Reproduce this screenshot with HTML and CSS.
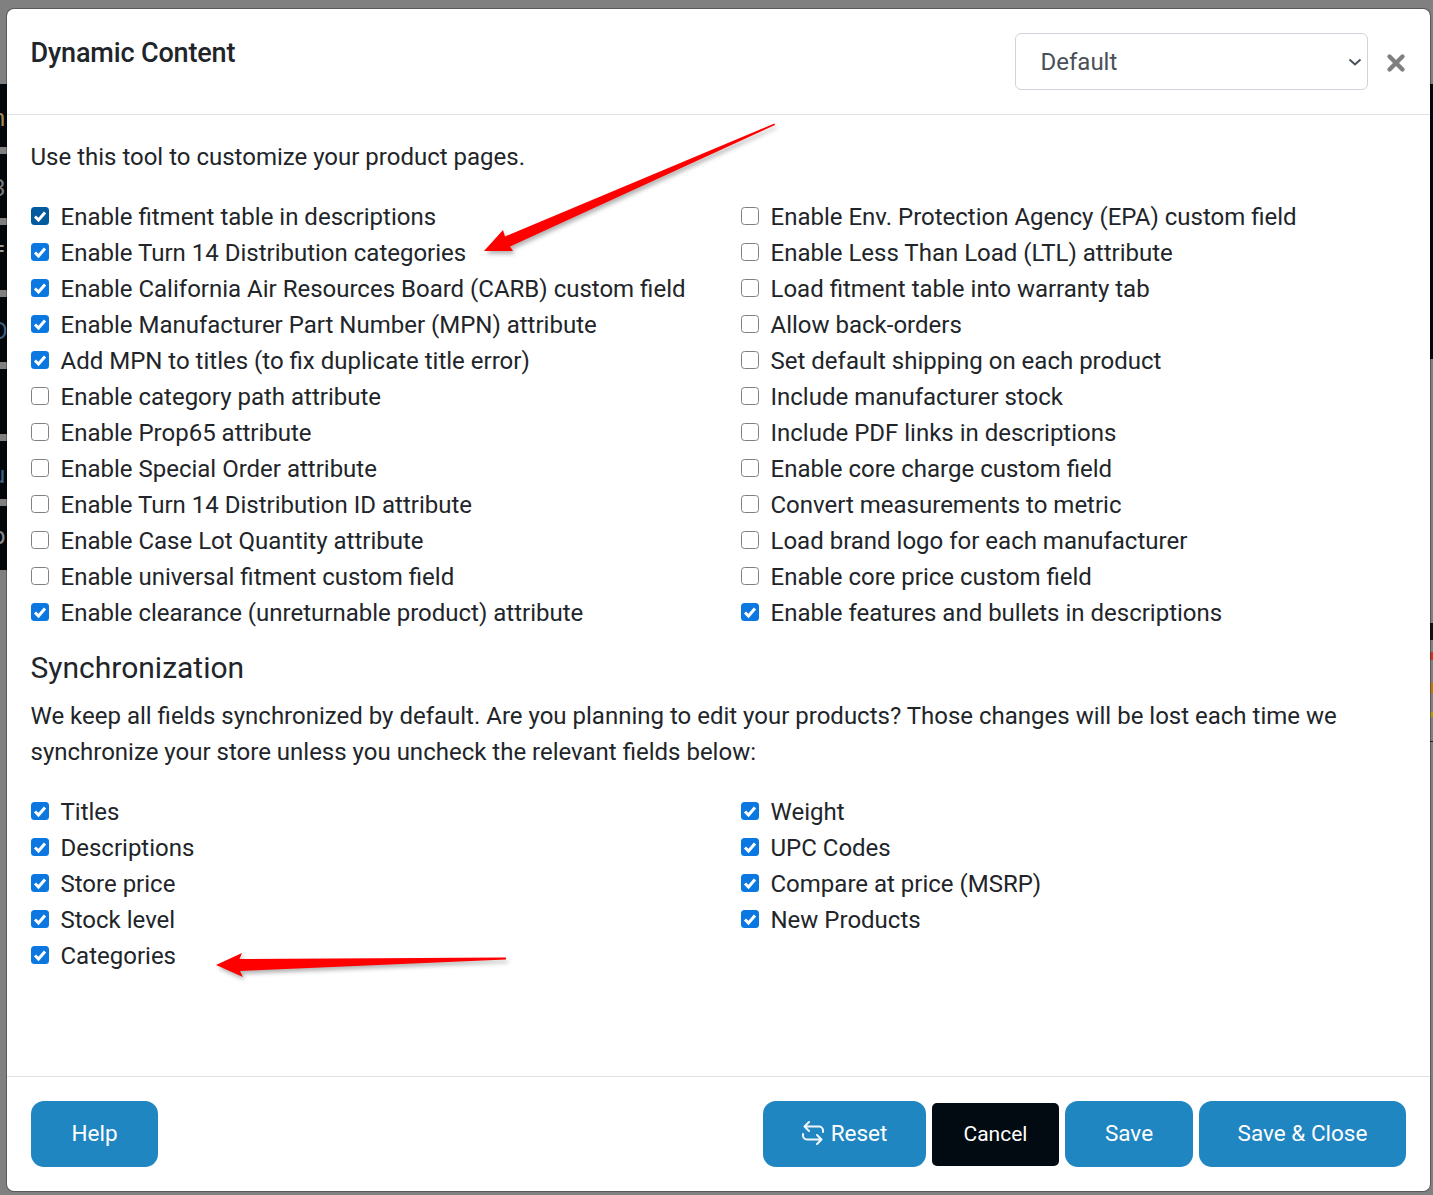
FILE: index.html
```html
<!DOCTYPE html>
<html lang="en">
<head>
<meta charset="utf-8">
<title>Dynamic Content</title>
<link rel="stylesheet" href="styles.css">
</head>
<body>
<div class="backdrop-left">
  <div class="strip s1"><span>n</span></div>
  <div class="strip s2"><span>3</span></div>
  <div class="strip s3"><span>=</span></div>
  <div class="strip s4"><span>D</span></div>
  <div class="strip s5"><span>t</span></div>
  <div class="strip s6"><span>u</span></div>
  <div class="strip s7"><span>p</span></div>
</div>
<div class="backdrop-right"></div>
<div class="mark m1"></div>
<div class="mark m2"></div>
<div class="mark m3"></div>
<div class="mark m4"></div>
<div class="mark m5"></div>
<main class="modal">
  <header class="modal-header">
    <h1 class="title">Dynamic Content</h1>
    <select class="preset"><option>Default</option></select>
    <button class="close" aria-label="Close">
      <svg width="20" height="20" viewBox="0 0 20 20"><path d="M3.500 3.500 L16.500 16.500 M16.500 3.500 L3.500 16.500" stroke="#808080" stroke-width="4.400" stroke-linecap="round"/></svg>
    </button>
  </header>
  <section class="modal-body">
    <p class="intro">Use this tool to customize your product pages.</p>
    <div class="options">
      <ul class="col">
        <li><label><input type="checkbox" class="focused" checked>Enable fitment table in descriptions</label></li>
        <li><label><input type="checkbox" checked>Enable Turn 14 Distribution categories</label></li>
        <li><label><input type="checkbox" checked>Enable California Air Resources Board (CARB) custom field</label></li>
        <li><label><input type="checkbox" checked>Enable Manufacturer Part Number (MPN) attribute</label></li>
        <li><label><input type="checkbox" checked>Add MPN to titles (to fix duplicate title error)</label></li>
        <li><label><input type="checkbox">Enable category path attribute</label></li>
        <li><label><input type="checkbox">Enable Prop65 attribute</label></li>
        <li><label><input type="checkbox">Enable Special Order attribute</label></li>
        <li><label><input type="checkbox">Enable Turn 14 Distribution ID attribute</label></li>
        <li><label><input type="checkbox">Enable Case Lot Quantity attribute</label></li>
        <li><label><input type="checkbox">Enable universal fitment custom field</label></li>
        <li><label><input type="checkbox" checked>Enable clearance (unreturnable product) attribute</label></li>
      </ul>
      <ul class="col">
        <li><label><input type="checkbox">Enable Env. Protection Agency (EPA) custom field</label></li>
        <li><label><input type="checkbox">Enable Less Than Load (LTL) attribute</label></li>
        <li><label><input type="checkbox">Load fitment table into warranty tab</label></li>
        <li><label><input type="checkbox">Allow back-orders</label></li>
        <li><label><input type="checkbox">Set default shipping on each product</label></li>
        <li><label><input type="checkbox">Include manufacturer stock</label></li>
        <li><label><input type="checkbox">Include PDF links in descriptions</label></li>
        <li><label><input type="checkbox">Enable core charge custom field</label></li>
        <li><label><input type="checkbox">Convert measurements to metric</label></li>
        <li><label><input type="checkbox">Load brand logo for each manufacturer</label></li>
        <li><label><input type="checkbox">Enable core price custom field</label></li>
        <li><label><input type="checkbox" checked>Enable features and bullets in descriptions</label></li>
      </ul>
    </div>
    <h2 class="subtitle">Synchronization</h2>
    <p class="para">We keep all fields synchronized by default. Are you planning to edit your products? Those changes will be lost each time we synchronize your store unless you uncheck the relevant fields below:</p>
    <div class="options">
      <ul class="col">
        <li><label><input type="checkbox" checked>Titles</label></li>
        <li><label><input type="checkbox" checked>Descriptions</label></li>
        <li><label><input type="checkbox" checked>Store price</label></li>
        <li><label><input type="checkbox" checked>Stock level</label></li>
        <li><label><input type="checkbox" checked>Categories</label></li>
      </ul>
      <ul class="col">
        <li><label><input type="checkbox" checked>Weight</label></li>
        <li><label><input type="checkbox" checked>UPC Codes</label></li>
        <li><label><input type="checkbox" checked>Compare at price (MSRP)</label></li>
        <li><label><input type="checkbox" checked>New Products</label></li>
      </ul>
    </div>
  </section>
  <footer class="modal-footer">
    <button class="btn btn-help">Help</button>
    <div class="actions">
      <button class="btn btn-reset">
        <svg class="reset-icon" width="22" height="24" viewBox="0 0 22 24" fill="none" stroke="#f1f6fa" stroke-width="2" stroke-linecap="round" stroke-linejoin="round"><path d="M7 1 L2.500 5.500 L7 10 M3 5.500 H17 a4 4 0 0 1 4 4 V11 M15 14 L19.500 18.500 L15 23 M19 18.500 H5 a4 4 0 0 1 -4 -4 V13"/></svg>Reset</button>
      <button class="btn btn-cancel">Cancel</button>
      <button class="btn btn-save">Save</button>
      <button class="btn btn-close">Save &amp; Close</button>
    </div>
  </footer>
</main>
<svg class="arrows" width="1433" height="1195" viewBox="0 0 1433 1195">
  <g class="arrow">
    <path d="M484 251 L503 230 L505 236.500 L774.500 123.500 L775 125 L510 246.500 L513 251 Z"/>
    <path d="M216 965 L242 953 L239.500 959 L506 957.500 L506 959.500 L240 971 L243 977 Z"/>
  </g>
</svg>
</body>
</html>
```
FILE: styles.css
```css
* { box-sizing: border-box; }
html, body { margin: 0; padding: 0; }
body {
  width: 1433px;
  height: 1195px;
  background: #808080;
  overflow: hidden;
  position: relative;
  font-family: Roboto, "Liberation Sans", sans-serif;
  color: #212529;
}
.backdrop-left {
  position: absolute;
  left: 0;
  top: 84px;
  width: 7px;
  height: 486px;
  overflow: hidden;
  display: flex;
  flex-direction: column;
  gap: 7px;
}
.strip {
  background: #02070c;
  color: #8a7a5a;
  font-size: 24px;
  line-height: 1;
  position: relative;
  overflow: hidden;
}
.strip span { position: absolute; left: -8px; }
.s1 { height: 63px; }
.s1 span { top: 22px; color: #a08a50; }
.s2 { height: 64px; }
.s2 span { top: 22px; color: #7a7a7a; }
.s3 { height: 65px; }
.s3 span { top: 12px; color: #9a9a9a; }
.s4 { height: 65px; }
.s4 span { top: 22px; color: #3f5f80; }
.s5 { height: 65px; }
.s5 span { top: 22px; color: #8a6a60; }
.s6 { height: 58px; }
.s6 span { top: 22px; color: #3f5f80; }
.s7 { height: 64px; }
.s7 span { top: 18px; color: #8a8a8a; }
.backdrop-right {
  position: absolute;
  right: 0;
  top: 84px;
  width: 3px;
  height: 275px;
  background: #02070c;
}
.mark { position: absolute; right: 0; width: 3px; }
.m1 { top: 623px; height: 17px; background: #111; }
.m2 { top: 652px; height: 8px; background: #c0392b; }
.m3 { top: 683px; height: 10px; background: #b5761c; }
.m4 { top: 712px; height: 5px; background: #a89a1e; }
.m5 { top: 741px; height: 1px; background: #222; }
.modal {
  position: absolute;
  left: 7px;
  top: 9px;
  width: 1423px;
  height: 1182px;
  background: #fff;
  border-radius: 7px;
  box-shadow: 0 0 0 1px rgba(0,0,0,.3);
  display: flex;
  flex-direction: column;
}
.modal-header {
  display: flex;
  align-items: flex-start;
  height: 106px;
  padding: 24px 24px 24px 23.5px;
  border-bottom: 1px solid #dee2e6;
  flex: none;
}
.title {
  margin: 0;
  font-size: 27px;
  line-height: 40px;
  font-weight: 500;
  flex: 1;
  letter-spacing: -0.15px;
}
.preset {
  appearance: none;
  width: 353px;
  height: 57px;
  font: 24px Roboto, sans-serif;
  color: #495057;
  background: #fff url("data:image/svg+xml,%3Csvg xmlns='http://www.w3.org/2000/svg' width='14' height='8' viewBox='0 0 14 8'%3E%3Cpath d='M1.500 1.500 L7 6.500 L12.500 1.500' fill='none' stroke='%23495057' stroke-width='2'/%3E%3C/svg%3E") no-repeat 332px 24px;
  border: 1px solid #ced4da;
  border-radius: 6px;
  padding: 0 24.500px;
}
.close {
  width: 38px;
  height: 57px;
  padding: 3px 0 0 18px;
  border: 0;
  background: none;
  display: flex;
  align-items: center;
}
.modal-body {
  padding: 24px 24px 0 23.5px;
  font-size: 24px;
  line-height: 36px;
  flex: 1;
}
.intro, .para { margin: 0; }
.intro { margin-bottom: 24px; }
.para { margin-bottom: 24px; }
.options {
  display: grid;
  grid-template-columns: 710px 1fr;
}
.col { list-style: none; margin: 0; padding: 0; }
.col li { height: 36px; }
.col label { display: flex; align-items: center; height: 36px; }
.col input {
  appearance: none;
  width: 18px;
  height: 18px;
  margin: -2px 11.5px 0 0.5px;
  flex: none;
  background: #fff;
  border: 1.5px solid #808080;
  border-radius: 3.500px;
}
.col input:checked {
  border: 0;
  background: #0a78e0 url("data:image/svg+xml,%3Csvg xmlns='http://www.w3.org/2000/svg' width='18' height='18' viewBox='0 0 18 18'%3E%3Cpath d='M4 9.500 L7.500 13 L14 5.500' fill='none' stroke='white' stroke-width='3'/%3E%3C/svg%3E") no-repeat center;
}
.col input.focused:checked { background-color: #005a9e; }
.subtitle {
  margin: 13px 0 0;
  font-size: 30px;
  line-height: 47px;
  height: 54px;
  font-weight: 400;
}
.modal-footer {
  flex: none;
  height: 115px;
  border-top: 1px solid #dee2e6;
  padding: 24px;
  display: flex;
  justify-content: space-between;
  align-items: flex-start;
}
.actions { display: flex; align-items: center; gap: 6px; height: 66px; }
.btn {
  height: 66px;
  border: 0;
  border-radius: 13px;
  background: #2086c2;
  color: #fff;
  font: 22.500px Roboto, sans-serif;
  padding: 0 0 2px;
  display: flex;
  align-items: center;
  justify-content: center;
}
.btn-help { width: 127px; }
.btn-reset { width: 163px; }
.reset-icon { margin-right: 7px; }
.btn-cancel {
  width: 127px;
  height: 63px;
  border-radius: 5px;
  background: #020b12;
  font-size: 21px;
  padding: 0;
}
.btn-save { width: 128px; }
.btn-close { width: 207px; }
.arrows {
  position: absolute;
  left: 0;
  top: 0;
  pointer-events: none;
}
.arrow { fill: #ff0000; filter: drop-shadow(2px 3px 2px rgba(0,0,0,.3)); }
```
